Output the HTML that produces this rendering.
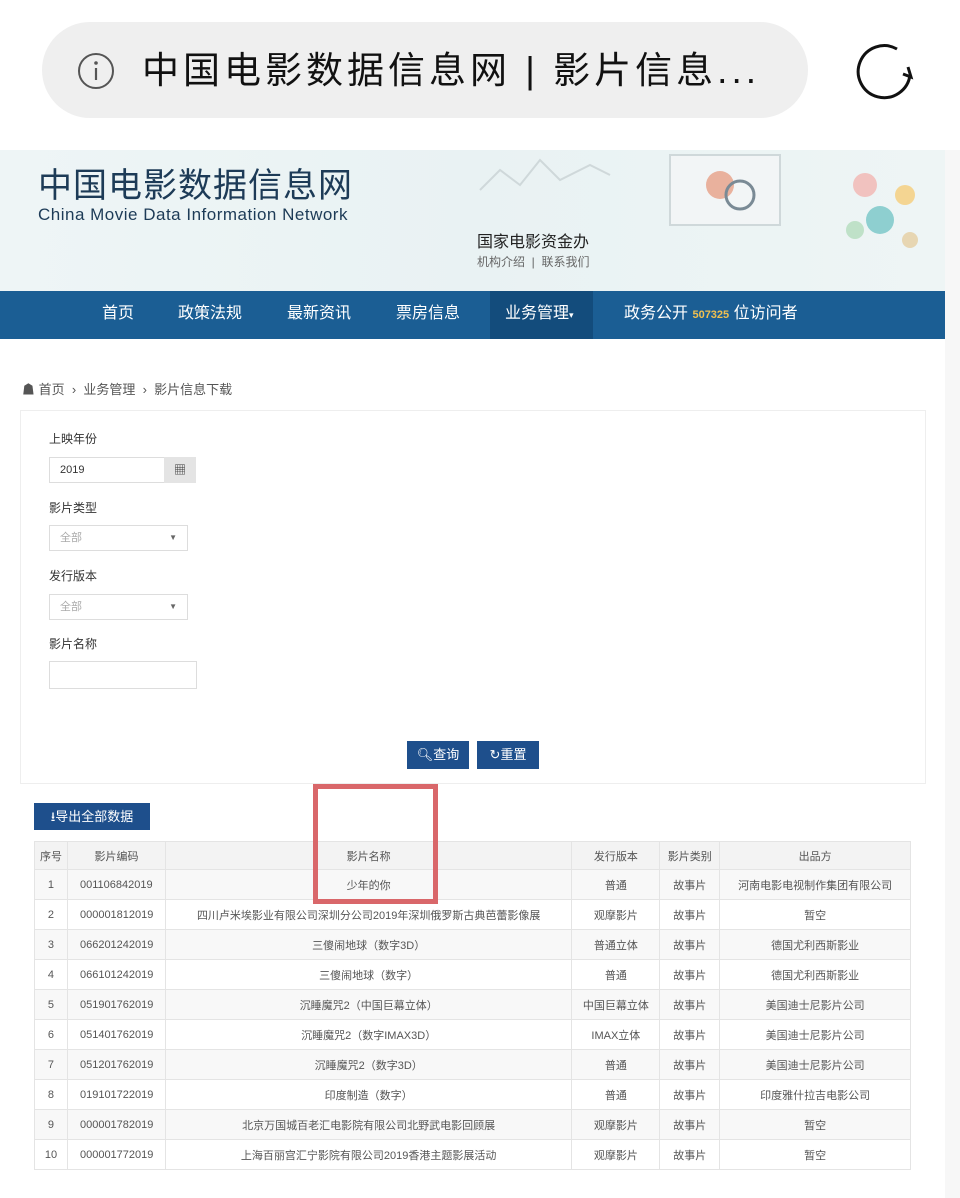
<!DOCTYPE html>
<html><head><meta charset="utf-8"><style>
*{margin:0;padding:0;box-sizing:border-box}
body{width:960px;height:1198px;background:#fff;font-family:"Liberation Sans","Noto Sans CJK SC",sans-serif;position:relative;overflow:hidden;color:#333}
.abs{position:absolute}
.pill{left:42px;top:22px;width:766px;height:96px;border-radius:48px;background:#efefef}
.title{left:142px;top:46px;font-size:37px;color:#111;white-space:nowrap;line-height:50px;letter-spacing:4px}
.hdr{left:0;top:150px;width:945px;height:141px;background:linear-gradient(90deg,#eef5f6,#e9f2f3 50%,#eef5f5)}
.nav{left:0;top:291px;width:945px;height:48px;background:#1b5e94}
.nav span{position:absolute;top:0;line-height:46px;color:#fff;font-size:16px}
.right{left:945px;top:150px;width:15px;height:1048px;background:#f7f7f7}
.lbl{font-size:12px;color:#333}
.inp{border:1px solid #ddd;background:#fff;font-size:11px;color:#333;padding-left:10px;line-height:24px}
.btn{background:#1e4f8c;color:#fff;font-size:13px;line-height:27px;text-align:center}
table{position:absolute;left:34px;top:841px;width:877px;border-collapse:collapse;font-size:11px;color:#555}
td{border:1px solid #e4e4e4;height:30px;text-align:center;padding:0}
tr:first-child td{height:28px;background:#f3f3f3}
tr:nth-child(even) td{background:#f8f8f8}
td.c{text-align:left;padding-left:12px}
</style></head><body>
<div class="abs pill"></div>
<svg class="abs" style="left:76px;top:51px" width="40" height="40"><circle cx="20" cy="20" r="17" fill="none" stroke="#555" stroke-width="2"/><circle cx="20" cy="12" r="1.8" fill="#555"/><line x1="20" y1="17" x2="20" y2="29" stroke="#555" stroke-width="2.2"/></svg>
<div class="abs title">中国电影数据信息网 | 影片信息...</div>
<svg class="abs" style="left:853px;top:39px" width="64" height="64"><path d="M44 10 A26 26 0 1 0 57 36" fill="none" stroke="#111" stroke-width="3"/><path d="M55 28 L58 38 L50 35" fill="none" stroke="#111" stroke-width="3"/></svg>
<div class="abs hdr"></div>
<svg class="abs" style="left:420px;top:150px" width="525" height="100"><g fill="none" stroke="#cfd8da" stroke-width="2"><path d="M60 40 L80 20 L100 35 L120 10 L140 30 L170 15 L190 25"/><rect x="250" y="5" width="110" height="70" fill="#f2f5f6"/></g><circle cx="300" cy="35" r="14" fill="#e9b19d"/><circle cx="320" cy="45" r="14" fill="none" stroke="#7a8a95" stroke-width="3"/><circle cx="445" cy="35" r="12" fill="#f1c2bf"/><circle cx="485" cy="45" r="10" fill="#f4d592"/><circle cx="460" cy="70" r="14" fill="#8ecfd0"/><circle cx="435" cy="80" r="9" fill="#bfe1c8"/><circle cx="490" cy="90" r="8" fill="#e7d6b2"/></svg>
<div class="abs" style="left:38px;top:166px;font-size:34px;color:#1d3b57;line-height:40px;letter-spacing:1px">中国电影数据信息网</div>
<div class="abs" style="left:38px;top:205px;font-size:17px;color:#1d3b57;letter-spacing:0.5px">China Movie Data Information Network</div>
<div class="abs" style="left:477px;top:228px;font-size:16px;color:#222">国家电影资金办</div>
<div class="abs" style="left:477px;top:253px;font-size:12px;color:#666">机构介绍 &nbsp;|&nbsp; 联系我们</div>
<div class="abs nav">
<div class="abs" style="left:490px;top:0;width:103px;height:48px;background:#134c7c"></div>
<span style="left:102px">首页</span><span style="left:178px">政策法规</span><span style="left:287px">最新资讯</span><span style="left:396px">票房信息</span><span style="left:505px">业务管理<small style="font-size:9px">▾</small></span><span style="left:624px">政务公开 <b style="font-size:11px;color:#f0c050">507325</b> 位访问者</span>
</div>
<div class="abs right"></div>
<div class="abs" style="left:22px;top:379px;font-size:13px;color:#555">☗ 首页 &nbsp;›&nbsp; 业务管理 &nbsp;›&nbsp; 影片信息下载</div>
<div class="abs" style="left:20px;top:410px;width:906px;height:374px;border:1px solid #eee"></div>
<div class="abs lbl" style="left:49px;top:430px">上映年份</div>
<div class="abs inp" style="left:49px;top:457px;width:116px;height:26px">2019</div>
<div class="abs" style="left:164px;top:457px;width:32px;height:26px;background:#e4e4e4;text-align:center;font-size:12px;line-height:26px">▦</div>
<div class="abs lbl" style="left:49px;top:499px">影片类型</div>
<div class="abs inp" style="left:49px;top:525px;width:139px;height:26px;color:#aaa">全部<span style="position:absolute;right:10px;font-size:8px;color:#666">▼</span></div>
<div class="abs lbl" style="left:49px;top:567px">发行版本</div>
<div class="abs inp" style="left:49px;top:594px;width:139px;height:26px;color:#aaa">全部<span style="position:absolute;right:10px;font-size:8px;color:#666">▼</span></div>
<div class="abs lbl" style="left:49px;top:635px">影片名称</div>
<div class="abs inp" style="left:49px;top:661px;width:148px;height:28px"></div>
<div class="abs btn" style="left:407px;top:741px;width:62px;height:28px">🔍︎查询</div>
<div class="abs btn" style="left:477px;top:741px;width:62px;height:28px">↻重置</div>
<div class="abs btn" style="left:34px;top:803px;width:116px;height:27px">⭳导出全部数据</div>
<table>
<colgroup><col style="width:33px"><col style="width:98px"><col style="width:407px"><col style="width:88px"><col style="width:60px"><col style="width:191px"></colgroup>
<tr><td>序号</td><td>影片编码</td><td>影片名称</td><td>发行版本</td><td>影片类别</td><td>出品方</td></tr>
<tr><td>1</td><td class="c">001106842019</td><td>少年的你</td><td>普通</td><td>故事片</td><td>河南电影电视制作集团有限公司</td></tr>
<tr><td>2</td><td class="c">000001812019</td><td>四川卢米埃影业有限公司深圳分公司2019年深圳俄罗斯古典芭蕾影像展</td><td>观摩影片</td><td>故事片</td><td>暂空</td></tr>
<tr><td>3</td><td class="c">066201242019</td><td>三傻闹地球（数字3D）</td><td>普通立体</td><td>故事片</td><td>德国尤利西斯影业</td></tr>
<tr><td>4</td><td class="c">066101242019</td><td>三傻闹地球（数字）</td><td>普通</td><td>故事片</td><td>德国尤利西斯影业</td></tr>
<tr><td>5</td><td class="c">051901762019</td><td>沉睡魔咒2（中国巨幕立体）</td><td>中国巨幕立体</td><td>故事片</td><td>美国迪士尼影片公司</td></tr>
<tr><td>6</td><td class="c">051401762019</td><td>沉睡魔咒2（数字IMAX3D）</td><td>IMAX立体</td><td>故事片</td><td>美国迪士尼影片公司</td></tr>
<tr><td>7</td><td class="c">051201762019</td><td>沉睡魔咒2（数字3D）</td><td>普通</td><td>故事片</td><td>美国迪士尼影片公司</td></tr>
<tr><td>8</td><td class="c">019101722019</td><td>印度制造（数字）</td><td>普通</td><td>故事片</td><td>印度雅什拉吉电影公司</td></tr>
<tr><td>9</td><td class="c">000001782019</td><td>北京万国城百老汇电影院有限公司北野武电影回顾展</td><td>观摩影片</td><td>故事片</td><td>暂空</td></tr>
<tr><td>10</td><td class="c">000001772019</td><td>上海百丽宫汇宁影院有限公司2019香港主题影展活动</td><td>观摩影片</td><td>故事片</td><td>暂空</td></tr>
</table>
<div class="abs" style="left:313px;top:784px;width:125px;height:120px;border:5px solid #d9676a"></div>
</body></html>
